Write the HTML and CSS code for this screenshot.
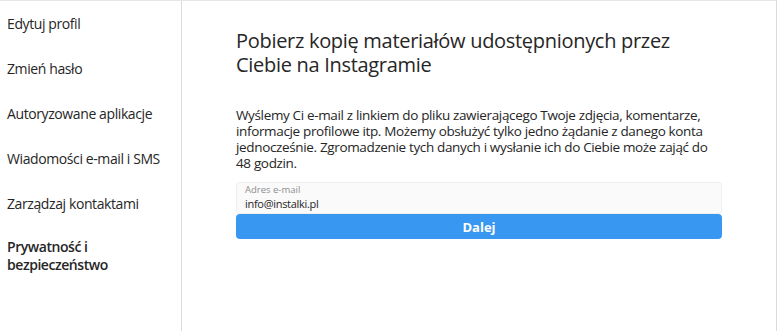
FILE: index.html
```html
<!DOCTYPE html>
<html lang="pl">
<head>
    <meta charset="UTF-8">
    <title>Prywatność i bezpieczeństwo</title>
    <link rel="stylesheet" href="styles.css">
</head>
<body>

    <div class="page">
        <ul class="menu">
            <li><a href="#">Edytuj profil</a></li>
            <li><a href="#">Zmień hasło</a></li>
            <li><a href="#">Autoryzowane aplikacje</a></li>
            <li><a href="#">Wiadomości e-mail i SMS</a></li>
            <li><a href="#">Zarządzaj kontaktami</a></li>
            <li class="active"><a href="#">Prywatność i bezpieczeństwo</a></li>
        </ul>

        <div class="content">
            <h2>Pobierz kopię materiałów udostępnionych przez Ciebie na Instagramie</h2>
            <p>Wyślemy Ci e-mail z linkiem do pliku zawierającego Twoje zdjęcia, komentarze, informacje profilowe itp. Możemy obsłużyć tylko jedno żądanie z danego konta jednocześnie. Zgromadzenie tych danych i wysłanie ich do Ciebie może zająć do 48 godzin.</p>
            <form>
                <label class="field">
                    <span class="field-label">Adres e-mail</span>
                    <input type="text" value="info@instalki.pl">
                </label>
                <button type="button">Dalej</button>
            </form>
        </div>
    </div>

</body>
</html>
```

FILE: styles.css
```css
body {
    font-family: 'Open Sans', sans-serif;
    background-color: #fff;
    margin: 0;
    padding: 0;
    color: #262626;
}

.page {
    display: flex;
    width: 777px;
    height: 331px;
    border-top: 1px solid #e6e6e6;
    border-right: 1px solid #dbdbdb;
    box-sizing: border-box;
}

.menu {
    list-style: none;
    margin: 0;
    padding: 0;
    width: 182px;
    flex-shrink: 0;
    border-right: 1px solid #dbdbdb;
    box-sizing: border-box;
}

.menu li {
    padding: 13px 4px 13px 7px;
    min-height: 19px;
    font-size: 14px;
    line-height: 19px;
    letter-spacing: -0.4px;
}

.menu a {
    color: #262626;
    text-decoration: none;
}

.menu li.active {
    line-height: 18px;
    padding-top: 12px;
}

.menu li.active a {
    font-weight: 600;
    letter-spacing: -0.45px;
}

.content {
    flex: 1;
    padding: 28px 54px 0 54px;
}

.content h2 {
    font-size: 20px;
    font-weight: 400;
    line-height: 24px;
    letter-spacing: -0.3px;
    margin: 0 0 30px;
}

.content p {
    font-size: 13.5px;
    line-height: 16px;
    letter-spacing: -0.35px;
    margin: 0 0 11px;
}

.field {
    display: block;
    height: 32px;
    background: #fafafa;
    border: 1px solid #efefef;
    border-radius: 3px;
    padding: 0 8px;
    box-sizing: border-box;
}

.field-label {
    display: block;
    font-size: 9.5px;
    color: #8e8e8e;
    line-height: 12px;
    padding-top: 1px;
}

.field input {
    display: block;
    width: 100%;
    border: none;
    background: transparent;
    padding: 0;
    font-family: 'Open Sans', sans-serif;
    font-size: 11px;
    line-height: 15px;
    letter-spacing: -0.3px;
    color: #262626;
    outline: none;
}

button {
    display: block;
    width: 100%;
    height: 25px;
    background: #3897f0;
    color: white;
    border: none;
    border-radius: 4px;
    font-family: 'Open Sans', sans-serif;
    font-size: 13px;
    font-weight: 700;
    cursor: pointer;
}
```
